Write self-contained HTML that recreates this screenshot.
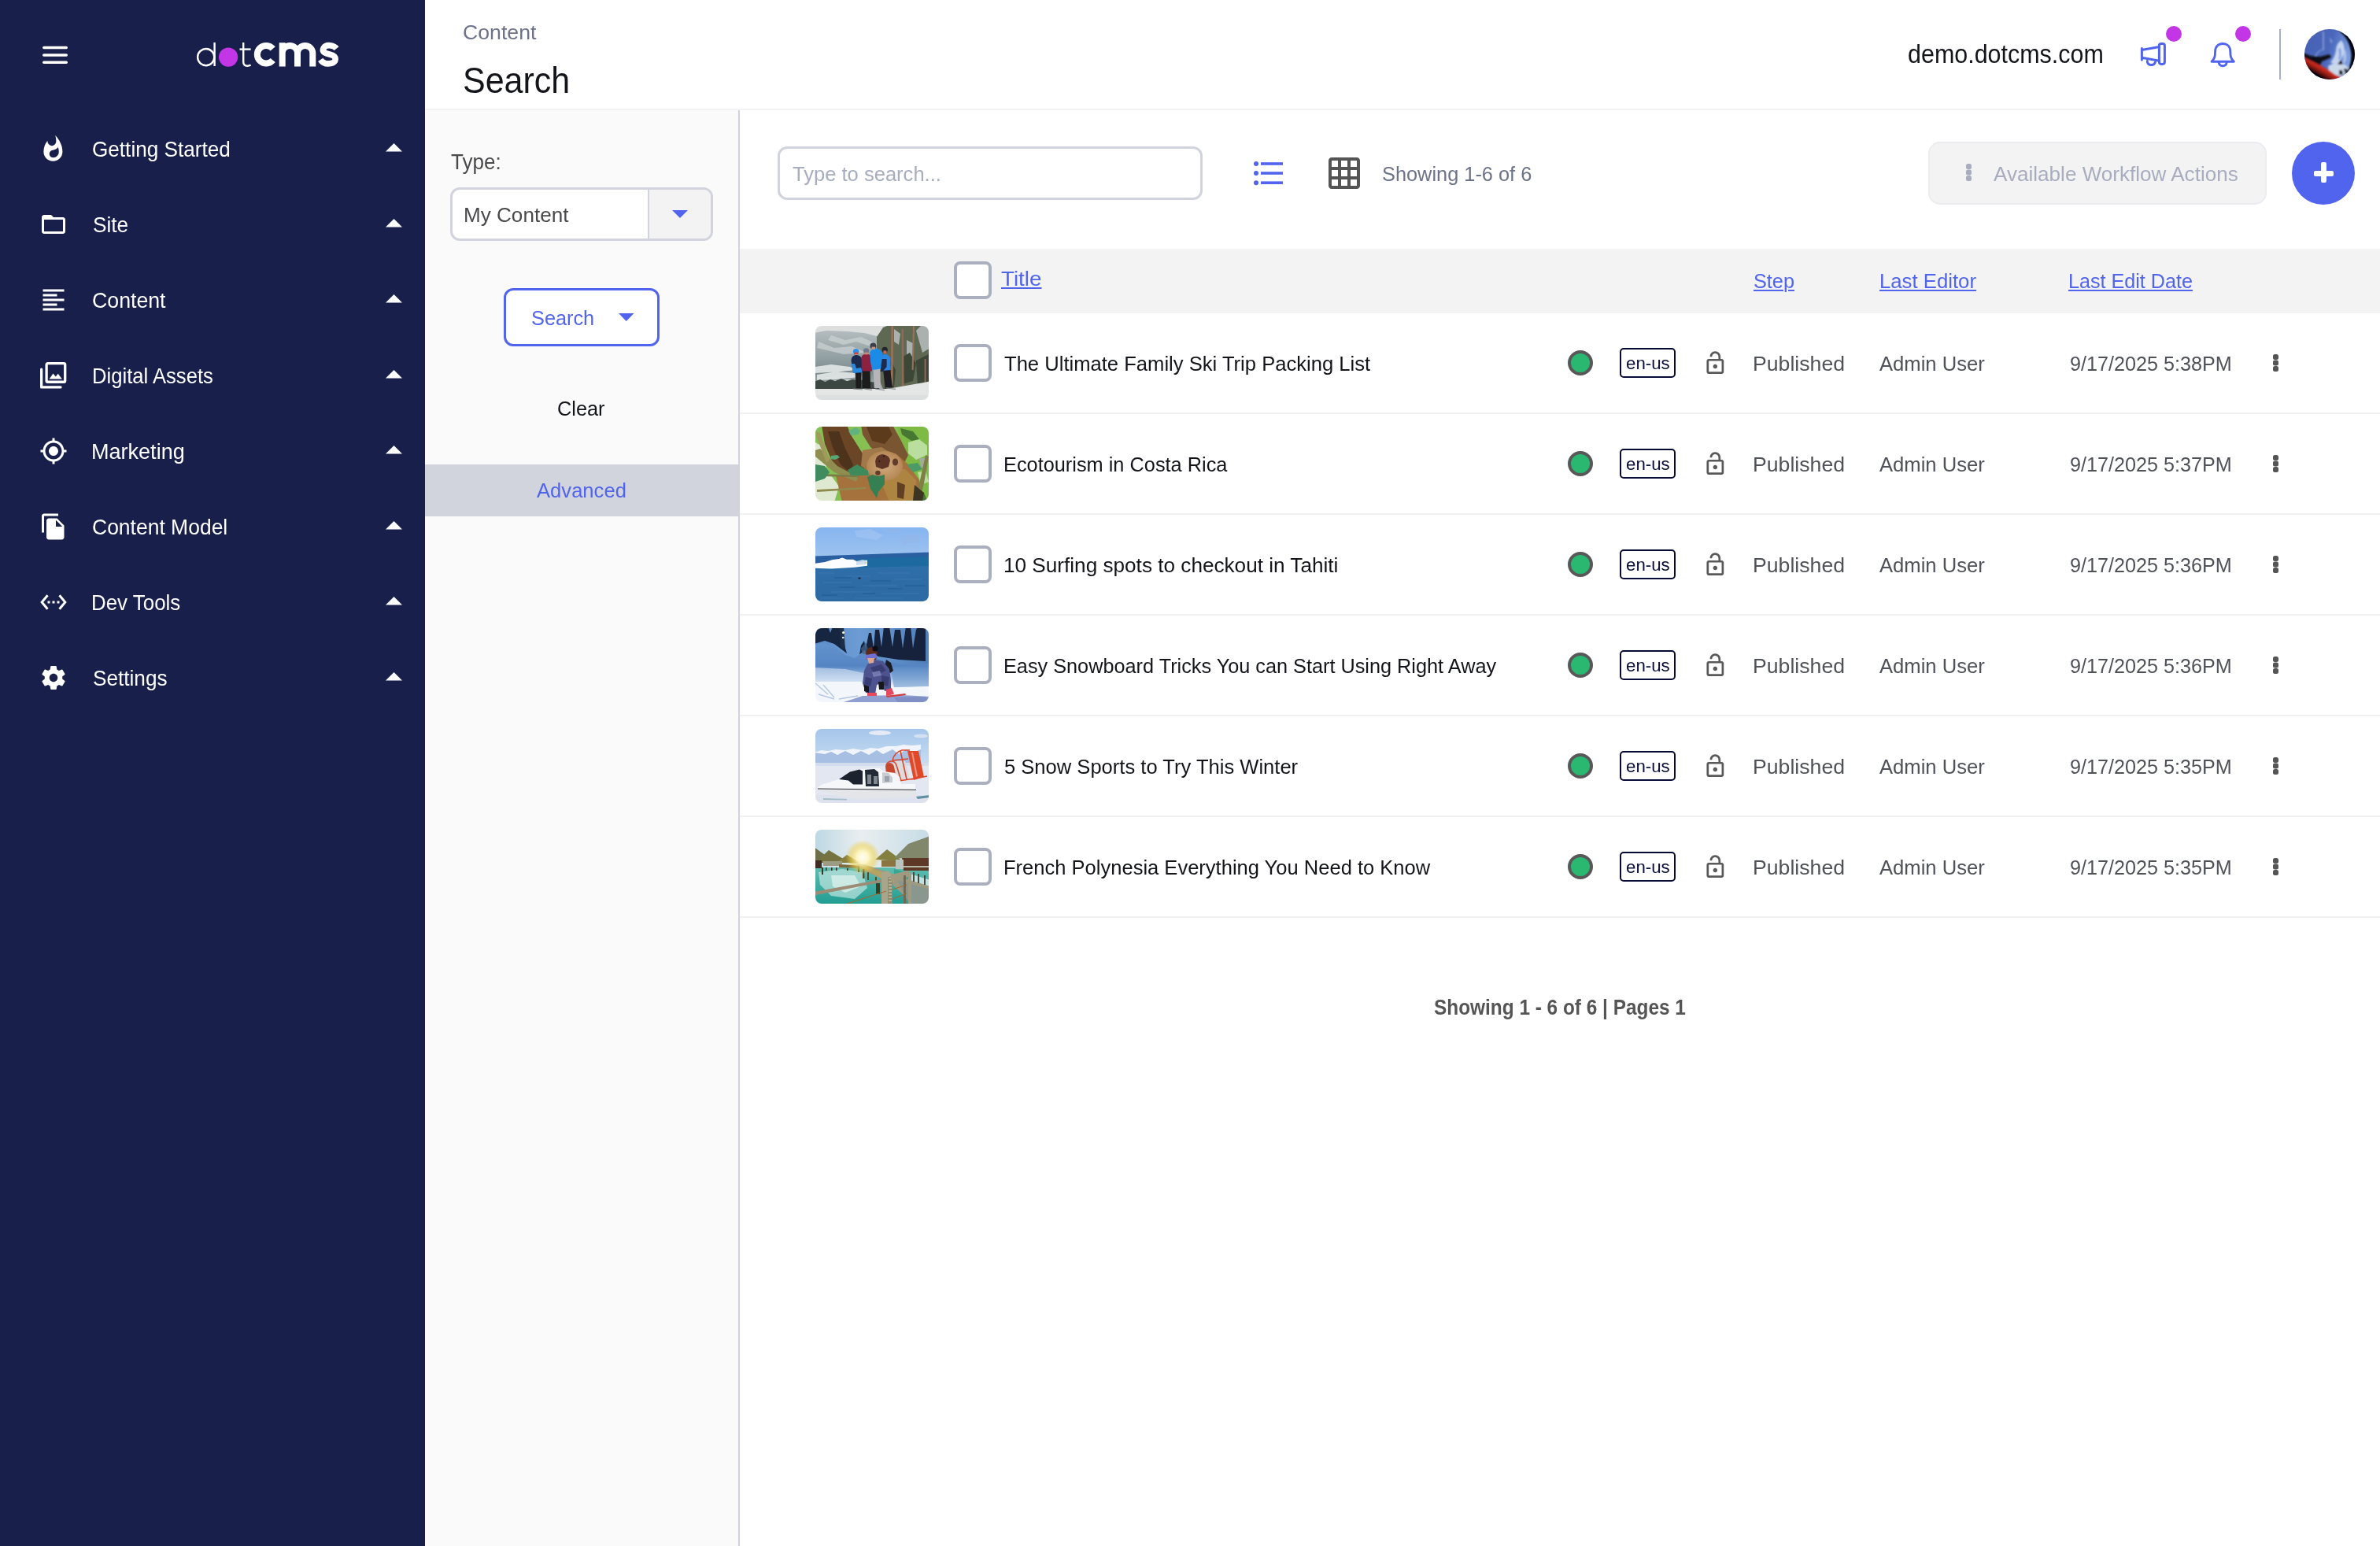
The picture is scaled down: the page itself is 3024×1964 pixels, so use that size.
<!DOCTYPE html>
<html lang="en"><head><meta charset="utf-8"><title>dotCMS - Content Search</title>
<style>
*{box-sizing:border-box;margin:0;padding:0}
html,body{width:3024px;height:1964px;overflow:hidden;background:#fff}
body{font-family:"Liberation Sans", sans-serif;position:relative}
div,span,a,nav,aside,header,main,section,button,ul,li,svg,label,h1{position:absolute}
.t{white-space:pre;line-height:1;transform-origin:0 0;display:block;font-weight:400}
ul{list-style:none}
button{border:0;background:none;font:inherit}
svg{overflow:visible}
.cb{width:48px;height:48px;border:4px solid #abb0c1;border-radius:8px;background:#fff}
.rowline{left:940px;width:2084px;height:2px;background:#f0f0f2}
.thumb{width:144px;height:94px;border-radius:8px;overflow:hidden;left:1036px}
.dot{width:32px;height:32px;border-radius:50%;background:#2ab870;border:4px solid #585858;left:1992px}
.lang{left:2058px;width:71px;height:38px;border:2px solid #070b33;border-radius:5px;background:#fff}
</style></head><body>

<aside style="left:0;top:0;width:540px;height:1964px;background:#181f4b">
<svg style="left:54px;top:58px" width="32" height="24" viewBox="0 0 32 24" ><rect x="0" y="0.8" width="32" height="3.4" rx="1.7" fill="#fff"/><rect x="0" y="10.3" width="32" height="3.4" rx="1.7" fill="#fff"/><rect x="0" y="19.6" width="32" height="3.4" rx="1.7" fill="#fff"/></svg>
<svg style="left:240px;top:40px" width="200" height="60" viewBox="0 0 200 60" ><g fill="none" stroke="#fff" stroke-width="2.4"><circle cx="21.7" cy="32.6" r="10.6"/><path d="M32.6 13.9V44"/><path d="M69.2 13.9V38.5q0 5.2 5 5.2q2.4 0 4.4-1.2"/><path d="M64.5 22.6H78.6"/></g><circle cx="50.1" cy="32.6" r="12.1" fill="#c336e5"/><g fill="none" stroke="#fff" stroke-width="8"><path d="M106.76 21.94A11.3 11.3 0 1 0 106.76 36.46"/><path d="M118.7 44.4V14.3M118.7 27.6A9.65 9.65 0 0 1 138 27.6V44.4M138 27.6A9.65 9.65 0 0 1 157.3 27.6V44.4"/><path stroke-width="7.6" d="M187.6 21.6C184 17.2 174.5 15.8 171.2 20.8C168 26.5 175 28.2 179.5 29.3C189 31.6 187.5 39.2 180.5 40.6C175 41.6 170 40 167.2 35.8"/></g></svg>
<nav style="left:0;top:0;width:540px;height:1000px"><ul style="left:0;top:0">
<li><svg style="left:50px;top:170.5px" width="36" height="36" viewBox="0 0 24 24" ><path d="M13.5.67s.74 2.65.74 4.9c0 2.14-1.4 3.88-3.54 3.88-2.15 0-3.77-1.74-3.77-3.88l.03-.36C4.87 7.7 3.6 10.95 3.6 14.5c0 4.42 3.58 8 8 8s8-3.58 8-8C19.6 9.11 17 4.3 13.5.67zM11.71 19.5c-1.78 0-3.22-1.4-3.22-3.14 0-1.62 1.05-2.76 2.81-3.12 1.77-.36 3.6-1.21 4.62-2.58.39 1.29.59 2.65.59 4.04 0 2.65-2.15 4.8-4.8 4.8z" fill="#fff"/></svg><span class="t" style="left:117.27px;top:175.00px;font-size:28.35px;color:#fff;transform:scaleX(0.9219);">Getting Started</span><svg style="left:489.5px;top:182.0px" width="21" height="10.5" viewBox="0 0 21 10.5" ><path d="M0 10.5L10.5 0L21 10.5z" fill="#fff"/></svg></li>
<li><svg style="left:50px;top:266.55px" width="36" height="36" viewBox="0 0 24 24" ><path d="M20 6h-8l-2-2H4c-1.1 0-1.99.9-1.99 2L2 18c0 1.1.9 2 2 2h16c1.1 0 2-.9 2-2V8c0-1.1-.9-2-2-2zm0 12H4V8h16v10z" fill="#fff"/></svg><span class="t" style="left:117.68px;top:271.05px;font-size:28.35px;color:#fff;transform:scaleX(0.9249);">Site</span><svg style="left:489.5px;top:278.05px" width="21" height="10.5" viewBox="0 0 21 10.5" ><path d="M0 10.5L10.5 0L21 10.5z" fill="#fff"/></svg></li>
<li><svg style="left:50px;top:362.6px" width="36" height="36" viewBox="0 0 24 24" ><path d="M15 15H3v2h12v-2zm0-8H3v2h12V7zM3 13h18v-2H3v2zm0 8h18v-2H3v2zM3 3v2h18V3H3z" fill="#fff"/></svg><span class="t" style="left:117.25px;top:367.10px;font-size:28.35px;color:#fff;transform:scaleX(0.9423);">Content</span><svg style="left:489.5px;top:374.1px" width="21" height="10.5" viewBox="0 0 21 10.5" ><path d="M0 10.5L10.5 0L21 10.5z" fill="#fff"/></svg></li>
<li><svg style="left:51.3px;top:459.84999999999997px" width="34" height="34" viewBox="0 0 34 34" ><g fill="none" stroke="#fff" stroke-width="3.3" stroke-linejoin="round" stroke-linecap="round"><rect x="8.1" y="1.65" width="23.6" height="23.6" rx="1.6"/><path d="M1.65 9.2V31.9H26"/></g><path d="M11.6 21.4l4.9-7 3.3 4.2 2.9-3.8 5.2 6.6z" fill="#fff"/></svg><span class="t" style="left:116.50px;top:463.15px;font-size:28.35px;color:#fff;transform:scaleX(0.9043);">Digital Assets</span><svg style="left:489.5px;top:470.15px" width="21" height="10.5" viewBox="0 0 21 10.5" ><path d="M0 10.5L10.5 0L21 10.5z" fill="#fff"/></svg></li>
<li><svg style="left:50px;top:554.7px" width="36" height="36" viewBox="0 0 24 24" ><path d="M12 8c-2.21 0-4 1.79-4 4s1.79 4 4 4 4-1.79 4-4-1.79-4-4-4zm8.94 3c-.46-4.17-3.77-7.48-7.94-7.94V1h-2v2.06C6.83 3.52 3.52 6.83 3.06 11H1v2h2.06c.46 4.17 3.77 7.48 7.94 7.94V23h2v-2.06c4.17-.46 7.48-3.77 7.94-7.94H23v-2h-2.06zM12 19c-3.87 0-7-3.13-7-7s3.13-7 7-7 7 3.13 7 7-3.13 7-7 7z" fill="#fff"/></svg><span class="t" style="left:116.39px;top:559.20px;font-size:28.35px;color:#fff;transform:scaleX(0.9539);">Marketing</span><svg style="left:489.5px;top:566.2px" width="21" height="10.5" viewBox="0 0 21 10.5" ><path d="M0 10.5L10.5 0L21 10.5z" fill="#fff"/></svg></li>
<li><svg style="left:50px;top:650.75px" width="36" height="36" viewBox="0 0 24 24" ><path d="M16 1H4c-1.1 0-2 .9-2 2v14h2V3h12V1zm-1 4l6 6v10c0 1.1-.9 2-2 2H7.99C6.89 23 6 22.1 6 21l.01-14c0-1.1.89-2 1.99-2h7zm-1 7h5.5L14 6.5V12z" fill="#fff"/></svg><span class="t" style="left:117.26px;top:655.25px;font-size:28.35px;color:#fff;transform:scaleX(0.9344);">Content Model</span><svg style="left:489.5px;top:662.25px" width="21" height="10.5" viewBox="0 0 21 10.5" ><path d="M0 10.5L10.5 0L21 10.5z" fill="#fff"/></svg></li>
<li><svg style="left:50px;top:746.8px" width="36" height="36" viewBox="0 0 24 24" ><path d="M7.77 6.76L6.23 5.48.82 12l5.41 6.52 1.54-1.28L3.42 12l4.35-5.24zM7 13h2v-2H7v2zm10-2h-2v2h2v-2zm-6 2h2v-2h-2v2zm6.77-7.52l-1.54 1.28L20.58 12l-4.35 5.24 1.54 1.28L23.18 12l-5.41-6.52z" fill="#fff"/></svg><span class="t" style="left:116.48px;top:751.30px;font-size:28.35px;color:#fff;transform:scaleX(0.9137);">Dev Tools</span><svg style="left:489.5px;top:758.3px" width="21" height="10.5" viewBox="0 0 21 10.5" ><path d="M0 10.5L10.5 0L21 10.5z" fill="#fff"/></svg></li>
<li><svg style="left:50px;top:842.85px" width="36" height="36" viewBox="0 0 24 24" ><path d="M19.43 12.98c.04-.32.07-.64.07-.98s-.03-.66-.07-.98l2.11-1.65c.19-.15.24-.42.12-.64l-2-3.46c-.12-.22-.39-.3-.61-.22l-2.49 1c-.52-.4-1.08-.73-1.69-.98l-.38-2.65C14.46 2.18 14.25 2 14 2h-4c-.25 0-.46.18-.49.42l-.38 2.65c-.61.25-1.17.59-1.69.98l-2.49-1c-.23-.09-.49 0-.61.22l-2 3.46c-.13.22-.07.49.12.64l2.11 1.65c-.04.32-.07.65-.07.98s.03.66.07.98l-2.11 1.65c-.19.15-.24.42-.12.64l2 3.46c.12.22.39.3.61.22l2.49-1c.52.4 1.08.73 1.69.98l.38 2.65c.03.24.24.42.49.42h4c.25 0 .46-.18.49-.42l.38-2.65c.61-.25 1.17-.59 1.69-.98l2.49 1c.23.09.49 0 .61-.22l2-3.46c.12-.22.07-.49-.12-.64l-2.11-1.65zM12 15.5c-1.93 0-3.5-1.57-3.5-3.5s1.57-3.5 3.5-3.5 3.5 1.57 3.5 3.5-1.57 3.5-3.5 3.5z" fill="#fff"/></svg><span class="t" style="left:117.68px;top:847.35px;font-size:28.35px;color:#fff;transform:scaleX(0.9229);">Settings</span><svg style="left:489.5px;top:854.35px" width="21" height="10.5" viewBox="0 0 21 10.5" ><path d="M0 10.5L10.5 0L21 10.5z" fill="#fff"/></svg></li>
</ul></nav></aside>
<header style="left:540px;top:0;width:2484px;height:140px;background:#fff;border-bottom:2px solid #f2f2f4"></header>
<span class="t" style="left:587.50px;top:27.89px;font-size:26.12px;color:#6c7389;transform:scaleX(1.0210);">Content</span>
<h1 class="t" style="left:588.16px;top:78.98px;font-size:46.09px;color:#14151a;transform:scaleX(0.9331);">Search</h1>
<span class="t" style="left:2423.65px;top:51.64px;font-size:33.5px;color:#14151a;transform:scaleX(0.9092);">demo.dotcms.com</span>
<svg style="left:2719.3px;top:52.9px" width="34" height="34" viewBox="0 0 34 34" ><g fill="none" stroke="#5064ee" stroke-width="3" stroke-linejoin="round" stroke-linecap="round"><rect x="24.4" y="2.4" width="7" height="26" rx="2.6"/><path d="M24.4 6.6L2.4 10.6M24.4 24.3L2.4 20.3M2.4 8.4V23"/><path d="M9.2 24.4q0.3 5.2 5.2 5.2q4.2 0 5-3.6"/></g></svg>
<svg style="left:2807.8px;top:52.9px" width="34" height="34" viewBox="0 0 34 34" ><g fill="none" stroke="#5064ee" stroke-width="2.9" stroke-linejoin="round" stroke-linecap="round"><path d="M2 25.2C5.6 21.6 6.6 19 6.6 12.4C6.6 6 10.8 2.5 16.2 2.5C21.6 2.5 25.8 6 25.8 12.4C25.8 19 26.8 21.6 30.4 25.2Z"/><path d="M11.2 26.4q0.6 4.4 5 4.4q4.4 0 5-4.4"/></g></svg>
<div style="left:2752px;top:33px;width:20.4px;height:20.4px;border-radius:50%;background:#c336e5"></div>
<div style="left:2840px;top:33px;width:20.4px;height:20.4px;border-radius:50%;background:#c336e5"></div>
<div style="left:2896px;top:37px;width:2px;height:64px;background:#a9aec2"></div>
<svg style="left:2928px;top:37px" width="64" height="64" viewBox="0 0 64 64" ><defs><clipPath id="avc"><circle cx="32" cy="32" r="32"/></clipPath><linearGradient id="avg" x1="0" y1="0" x2="1" y2="0.3"><stop offset="0" stop-color="#4761b2"/><stop offset=".55" stop-color="#4a67bb"/><stop offset="1" stop-color="#7ea0e2"/></linearGradient><linearGradient id="avr" gradientUnits="userSpaceOnUse" x1="30" y1="48" x2="22" y2="62"><stop offset="0" stop-color="#f03c2b"/><stop offset=".45" stop-color="#b52418"/><stop offset="1" stop-color="#120304"/></linearGradient><filter id="avb" x="-10%" y="-10%" width="120%" height="120%"><feGaussianBlur stdDeviation="0.9"/></filter></defs><g clip-path="url(#avc)"><rect width="64" height="64" fill="url(#avg)"/><g filter="url(#avb)"><path d="M24 3V27" stroke="#b9c8ec" stroke-width="1.3" opacity=".75"/><path d="M14 34q4-7 9-8" stroke="#a9bce6" stroke-width="1.2" fill="none" opacity=".7"/><path d="M32 10l3 5-1 4z" fill="#c5d4f0" opacity=".7"/><path d="M47 14q-7 5-7 13-1 9-7 15l8 4q7-8 9-16 2-9-3-16z" fill="#d6e4f7" opacity=".85"/><path d="M52 26q3 8 0 16l-4 4q3-10 0-18z" fill="#c5d6f2" opacity=".7"/><path d="M46 24q2 7 0 14l-3 1q2-8 0-14z" fill="#6a8ad6" opacity=".7"/><path d="M36 -3Q58 8 59.6 34Q59 48 51 60L70 66V-6z" fill="#030409"/><path d="M-2 30l10 4 12 1 12-3 2 4-12 5-2 5 12 7 10 8 6 10H-4z" fill="#0c0c12"/><path d="M-2 35L20 46 46 60 40 68H-4z" fill="url(#avr)"/><path d="M-4 44L22 60 30 70H-6z" fill="#060507"/><path d="M30 47l6-3 8 1 8 0 4 5-4 7-7 3-6-2-8-6z" fill="#cbd8ea"/><path d="M42 45l4-6 3 6zM44 52l4 0 1 6-5 0zM50 50l5 1-3 7z" fill="#0d0e13"/></g></g></svg>
<section style="left:540px;top:140px;width:400px;height:1824px;background:#fafafa;border-right:2px solid #d0d3dd"></section>
<label class="t" style="left:572.59px;top:191.95px;font-size:27.23px;color:#4a4a4c;transform:scaleX(0.9574);">Type:</label>
<div style="left:572px;top:238px;width:334px;height:68px;border:3px solid #d1d4de;border-radius:12px;background:#fff;overflow:hidden"><div style="left:247.5px;top:0;width:84px;height:62px;background:#f3f3f4;border-left:2.5px solid #d1d4de"></div></div>
<span class="t" style="left:589.46px;top:260.03px;font-size:26.54px;color:#4a4a4c;transform:scaleX(0.9834);">My Content</span>
<svg style="left:854.0px;top:267.0px" width="20" height="10" viewBox="0 0 20 10" ><path d="M0 0H20L10.0 10z" fill="#5064ee"/></svg>
<button style="left:640px;top:366px;width:198px;height:74px;border:3px solid #5064ee;border-radius:12px;background:#fff"></button>
<span class="t" style="left:674.96px;top:390.53px;font-size:26.54px;color:#5064ee;transform:scaleX(0.9539);">Search</span>
<svg style="left:785.5px;top:398.0px" width="19.5" height="10" viewBox="0 0 19.5 10" ><path d="M0 0H19.5L9.75 10z" fill="#5064ee"/></svg>
<span class="t" style="left:708.31px;top:505.53px;font-size:26.54px;color:#14151a;transform:scaleX(0.9549);">Clear</span>
<div style="left:540px;top:590px;width:398px;height:65.5px;background:#d1d4dd"></div>
<span class="t" style="left:682.00px;top:610.03px;font-size:26.54px;color:#5064ee;transform:scaleX(0.9652);">Advanced</span>
<div style="left:988px;top:186px;width:540px;height:68px;border:3px solid #d1d4de;border-radius:12px;background:#fff"></div>
<span class="t" style="left:1007.10px;top:207.53px;font-size:26.54px;color:#a7adbf;transform:scaleX(0.9631);">Type to search...</span>
<svg style="left:1593px;top:204.8px" width="38" height="31" viewBox="0 0 38 31" ><circle cx="3" cy="3.0" r="3" fill="#5064ee"/><rect x="9" y="1.2" width="28" height="3.6" fill="#5064ee"/><circle cx="3" cy="15.0" r="3" fill="#5064ee"/><rect x="9" y="13.2" width="28" height="3.6" fill="#5064ee"/><circle cx="3" cy="27.2" r="3" fill="#5064ee"/><rect x="9" y="25.4" width="28" height="3.6" fill="#5064ee"/></svg>
<svg style="left:1684px;top:196px" width="48" height="48" viewBox="0 0 24 24" ><path d="M20 2H4c-1.1 0-2 .9-2 2v16c0 1.1.9 2 2 2h16c1.1 0 2-.9 2-2V4c0-1.1-.9-2-2-2zM8 20H4v-4h4v4zm0-6H4v-4h4v4zm0-6H4V4h4v4zm6 12h-4v-4h4v4zm0-6h-4v-4h4v4zm0-6h-4V4h4v4zm6 12h-4v-4h4v4zm0-6h-4v-4h4v4zm0-6h-4V4h4v4z" fill="#555"/></svg>
<span class="t" style="left:1755.71px;top:207.53px;font-size:26.54px;color:#6c7389;transform:scaleX(0.9555);">Showing 1-6 of 6</span>
<button style="left:2450px;top:180px;width:430px;height:80px;border:2px solid #ebecef;border-radius:15px;background:#f3f3f4"></button>
<svg style="left:2497.5px;top:208.0px" width="7" height="22.0" viewBox="0 0 7 22.0" ><rect x="0" y="0.00" width="7" height="7" rx="2.52" fill="#a7adbf"/><rect x="0" y="7.50" width="7" height="7" rx="2.52" fill="#a7adbf"/><rect x="0" y="15.00" width="7" height="7" rx="2.52" fill="#a7adbf"/></svg>
<span class="t" style="left:2533.00px;top:207.53px;font-size:26.54px;color:#a7adbf;transform:scaleX(0.9832);">Available Workflow Actions</span>
<button style="left:2912px;top:180px;width:80px;height:80px;border-radius:50%;background:#5064ee"><div style="left:27.5px;top:36.5px;width:25.5px;height:7px;border-radius:2px;background:#fff"></div><div style="left:36.75px;top:26px;width:7px;height:25.5px;border-radius:2px;background:#fff"></div></button>
<div style="left:940px;top:316px;width:2084px;height:82px;background:#f3f3f4"></div>
<div class="cb" style="left:1212px;top:332px;width:48px;height:48px;"></div>
<a class="t" style="left:1271.50px;top:340.53px;font-size:26.54px;color:#5064ee;transform:scaleX(1.0477);text-decoration:underline;text-decoration-thickness:2px;text-underline-offset:1.5px;">Title</a>
<a class="t" style="left:2228.00px;top:343.53px;font-size:26.54px;color:#5064ee;transform:scaleX(0.9524);text-decoration:underline;text-decoration-thickness:2px;text-underline-offset:1.5px;">Step</a>
<a class="t" style="left:2388.00px;top:343.53px;font-size:26.54px;color:#5064ee;transform:scaleX(0.9695);text-decoration:underline;text-decoration-thickness:2px;text-underline-offset:1.5px;">Last Editor</a>
<a class="t" style="left:2628.00px;top:343.53px;font-size:26.54px;color:#5064ee;transform:scaleX(0.9478);text-decoration:underline;text-decoration-thickness:2px;text-underline-offset:1.5px;">Last Edit Date</a>
<div class="rowline" style="top:524px"></div>
<div class="thumb" style="top:414px"><svg style="left:0;top:0" width="144" height="94" viewBox="0 0 144 94"><defs><filter id="tb0" x="-5%" y="-5%" width="110%" height="110%"><feGaussianBlur stdDeviation="0.55"/></filter><linearGradient id="t0m" x1="0" y1="0" x2="0" y2="1"><stop offset="0" stop-color="#b3bcbe"/><stop offset=".45" stop-color="#93a0a3"/><stop offset=".7" stop-color="#7d8b8d"/><stop offset="1" stop-color="#a9b2b3"/></linearGradient></defs><g filter="url(#tb0)"><rect x="-2" y="-2" width="148" height="98" fill="#dcdfde"/><path d="M-2 9L14 6L40 7L62 9L82 14L100 22V82H-2z" fill="url(#t0m)"/><path d="M20 12l18 6 20-4 22 10-10 2-18-6-16 4-20-6zM4 20l20 8 22-2 20 8-30 2-34-8z" fill="#c9d0d2" opacity=".75"/><path d="M0 52l20-3 24 3 8 4-20 2-32 2zM2 62l24-4 28 2 2 5-30 3-24 1zM12 70l30-2 14 3-40 3z" fill="#e9ecec" opacity=".85"/><path d="M-2 71l8-3 6 3 7-3 6 2 8-3 7 3 8-2 7 2 6-2 8 3 12 1v10H-2z" fill="#3d4743"/><path d="M78 14l8-12 10-4h50v76l-30 8-30-2-8-20 6-14-6-12z" fill="#5f6853"/><path d="M100 4l8 6-2 14-6-4zM116 18l8 4v20l-8-6zM128 6l8-8h10v30l-10 6z" fill="#c3cacc" opacity=".75"/><path d="M110 40l10-6 8 14-4 22-14 4z M128 44l16-8v34l-14 6z M86 52l10-8 6 12-2 22-12 2z" fill="#3e4737"/><path d="M96.5 -2h2.6l-.6 78h-2.6z" fill="#9b7259"/><path d="M109.6 4h2.4l.6 74h-2.6z" fill="#8f6b55"/><path d="M124 -2h2.2l-1.6 58h-2z" fill="#9b7259"/><path d="M138.6 42h2v30h-2z" fill="#8a6a55"/><path d="M-2 80H92l54-9.5V96H-2z" fill="#e4e6e6"/><path d="M-2 88H146V96H-2z" fill="#dcdfdf"/><path d="M50.5 58h8l-.6 21h-6.2z" fill="#1b1b1f"/><path d="M45.5 44q0-6 6-7 6 0 7.5 5l1 17H48z" fill="#1c2b4e"/><path d="M46 48l4 0 2 6 6-1 2 6-12 1z" fill="#2a8ae2"/><circle cx="51.6" cy="32.6" r="3.7" fill="#2b90e8"/><rect x="49" y="33.6" width="5.4" height="2.6" fill="#e6402a"/><path d="M59.5 56h10l.6 23h-10.4z" fill="#1a1a1e"/><path d="M58.4 40q1-4 6.4-4.4 6 .4 6.8 5l.4 17H59z" fill="#8c2040"/><circle cx="64.6" cy="31.8" r="3.6" fill="#6f7690"/><rect x="62.4" y="33.6" width="4.6" height="2.8" fill="#c98a7a"/><path d="M73.4 53h9l.4 26h-8z" fill="#b6b6b8"/><path d="M69 34q2-5 8-5.4 6 .8 8 6l1.2 12-1.8 8-12 1.4-2-8z" fill="#1f8be8"/><circle cx="73.4" cy="25.4" r="4" fill="#3b3e47"/><rect x="71.4" y="26.6" width="4.6" height="3.4" fill="#c79382"/><path d="M86 55h9l3 23h-9z" fill="#1c1c21"/><path d="M83 40q2-4 6.4-4 5 1 6 6l.4 14-11 1z" fill="#2a86e2"/><path d="M84.6 42h6v10l-5 6h-3z" fill="#1c2b4e"/><circle cx="88.2" cy="30.4" r="3.7" fill="#24252b"/><rect x="86.4" y="31.4" width="4" height="3.6" fill="#c0685a"/><path d="M48 80l12 1M62 80l10 1.4M76 80l12 1.6M90 79l12 1.4" stroke="#8a8f92" stroke-width="1.2"/></g></svg></div>
<div class="cb" style="left:1212px;top:437px"></div>
<span class="t" style="left:1276.10px;top:448.69px;font-size:26.12px;color:#14151a;transform:scaleX(0.9804);">The Ultimate Family Ski Trip Packing List</span>
<div class="dot" style="top:445px"></div>
<div class="lang" style="top:442px"></div>
<span class="t" style="left:2066.30px;top:451.18px;font-size:22px;color:#0a0e3a;transform:scaleX(1.0120);">en-us</span>
<svg style="left:2163.35px;top:444.84000000000003px" width="32.7" height="32.7" viewBox="0 0 24 24" ><path d="M18 8h-1V6c0-2.76-2.24-5-5-5S7 3.24 7 6h2c0-1.66 1.34-3 3-3s3 1.34 3 3v2H6c-1.1 0-2 .9-2 2v10c0 1.1.9 2 2 2h12c1.1 0 2-.9 2-2V10c0-1.1-.9-2-2-2zm0 12H6V10h12v10zm-6-3c1.1 0 2-.9 2-2s-.9-2-2-2-2 .9-2 2 .9 2 2 2z" fill="#595959"/></svg>
<span class="t" style="left:2226.92px;top:448.69px;font-size:26.12px;color:#50525a;transform:scaleX(1.0206);">Published</span>
<span class="t" style="left:2388.00px;top:448.69px;font-size:26.12px;color:#50525a;transform:scaleX(0.9812);">Admin User</span>
<span class="t" style="left:2629.82px;top:448.69px;font-size:26.12px;color:#50525a;transform:scaleX(0.9644);">9/17/2025 5:38PM</span>
<svg style="left:2888.0px;top:449.5px" width="7" height="22.0" viewBox="0 0 7 22.0" ><rect x="0" y="0.00" width="7" height="7" rx="2.52" fill="#555"/><rect x="0" y="7.50" width="7" height="7" rx="2.52" fill="#555"/><rect x="0" y="15.00" width="7" height="7" rx="2.52" fill="#555"/></svg>
<div class="rowline" style="top:652px"></div>
<div class="thumb" style="top:542px"><svg style="left:0;top:0" width="144" height="94" viewBox="0 0 144 94"><defs><filter id="tb1" x="-5%" y="-5%" width="110%" height="110%"><feGaussianBlur stdDeviation="0.55"/></filter><radialGradient id="t1f" cx=".5" cy=".5" r=".5"><stop offset="0" stop-color="#d2ab7e"/><stop offset="1" stop-color="#b58755"/></radialGradient></defs><g filter="url(#tb1)"><rect x="-2" y="-2" width="148" height="98" fill="#86c052"/><path d="M0 20l10 6 4 26-14 4zM0 66l20-4 10 14-6 20H-2z" fill="#dfe9d2"/><path d="M104 0h42v94h-30l6-30-10-26z" fill="#7dbb45"/><path d="M118 20l14-4 10 8v12l-14 6-10-8z M130 58l10-2 4 14-10 4z" fill="#cfe9bb" opacity=".75"/><path d="M108 2l16 4 8 10-10 2-12-8z M124 78l14 6 4 10h-18z" fill="#2f5a2a" opacity=".7"/><path d="M132 40l10 0 0 12-8 0z" fill="#b9a0d8" opacity=".6"/><path d="M8 -2h32l6 14 14 22 6 22-8 12-22-2-14-20-10-24z" fill="#6b4525"/><path d="M16 6l14 0 8 22 10 20-4 10-12-10-10-22z" fill="#4d301a"/><path d="M58 -2h40l10 18 10 20-6 12-24-8-18-14-10-16z" fill="#7a5530"/><path d="M64 -2h28l6 12-10 12-16-4z" fill="#5c3a1e"/><path d="M60 30l24-4 22 14 6 14-30 10-24-14z" fill="#a07848"/><path d="M26 62l30-2 16-20 30-6 16 14 14 20 4 28H34z" fill="#a5713d"/><path d="M92 54l22 0 14 14 0 28h-34l-8-20z" fill="#ad8440"/><path d="M104 70l10 4-2 18-8-2z" fill="#5f4122"/><ellipse cx="88" cy="50" rx="23" ry="19" fill="url(#t1f)"/><path d="M76 44q1-8 9-9 9 1 10 8l-2 8-8 3-8-3z" fill="#5b3628"/><circle cx="81.4" cy="44" r="1" fill="#2a1510"/><circle cx="87" cy="37.6" r="1" fill="#2a1510"/><ellipse cx="101.5" cy="45" rx="3.6" ry="4.6" fill="#5e3d2a"/><ellipse cx="79.4" cy="58.8" rx="3.2" ry="3" fill="#5e3d2a"/><path d="M0 30l6-2 22 22 26 14-2 6-28-12-24-20z" fill="#8f8d4f"/><path d="M0 6l6 2 12 34-4 4L2 14z" fill="#a09b5c"/><path d="M-2 60l58 1.6v2.6l-58-1.4z" fill="#7d7b4a"/><path d="M2 80l62-3v2l-62 4z" fill="#8e8b4e"/><path d="M140 36l4 2-6 34-6 24h-5l6-28z" fill="#7f7f45"/><path d="M126 74l12 10-2 10h-12z" fill="#3a3420"/><path d="M0 48l12 2 6 8-6 8-12 4z" fill="#3f8c5e"/><path d="M20 37l8-1 3 3-6 3-6-1z" fill="#5aa577"/><path d="M42 5l10-4 5 4-2 5-10 1z" fill="#62b27f"/><path d="M41 55l12-7 14 8 0 6-22 0z" fill="#3d8a5c"/><path d="M66 64l6-3 8 2 8-2 0 12-8 10-2 8-8-12z" fill="#357f52"/><path d="M116 48l14-2 6 8-12 4z" fill="#4c9a68"/></g></svg></div>
<div class="cb" style="left:1212px;top:565px"></div>
<span class="t" style="left:1274.52px;top:576.69px;font-size:26.12px;color:#14151a;transform:scaleX(0.9703);">Ecotourism in Costa Rica</span>
<div class="dot" style="top:573px"></div>
<div class="lang" style="top:570px"></div>
<span class="t" style="left:2066.30px;top:579.18px;font-size:22px;color:#0a0e3a;transform:scaleX(1.0120);">en-us</span>
<svg style="left:2163.35px;top:572.84px" width="32.7" height="32.7" viewBox="0 0 24 24" ><path d="M18 8h-1V6c0-2.76-2.24-5-5-5S7 3.24 7 6h2c0-1.66 1.34-3 3-3s3 1.34 3 3v2H6c-1.1 0-2 .9-2 2v10c0 1.1.9 2 2 2h12c1.1 0 2-.9 2-2V10c0-1.1-.9-2-2-2zm0 12H6V10h12v10zm-6-3c1.1 0 2-.9 2-2s-.9-2-2-2-2 .9-2 2 .9 2 2 2z" fill="#595959"/></svg>
<span class="t" style="left:2226.92px;top:576.69px;font-size:26.12px;color:#50525a;transform:scaleX(1.0206);">Published</span>
<span class="t" style="left:2388.00px;top:576.69px;font-size:26.12px;color:#50525a;transform:scaleX(0.9812);">Admin User</span>
<span class="t" style="left:2629.82px;top:576.69px;font-size:26.12px;color:#50525a;transform:scaleX(0.9644);">9/17/2025 5:37PM</span>
<svg style="left:2888.0px;top:577.5px" width="7" height="22.0" viewBox="0 0 7 22.0" ><rect x="0" y="0.00" width="7" height="7" rx="2.52" fill="#555"/><rect x="0" y="7.50" width="7" height="7" rx="2.52" fill="#555"/><rect x="0" y="15.00" width="7" height="7" rx="2.52" fill="#555"/></svg>
<div class="rowline" style="top:780px"></div>
<div class="thumb" style="top:670px"><svg style="left:0;top:0" width="144" height="94" viewBox="0 0 144 94"><defs><filter id="tb2" x="-5%" y="-5%" width="110%" height="110%"><feGaussianBlur stdDeviation="0.55"/></filter><linearGradient id="t2s" x1="0" y1="0" x2="0" y2="1"><stop offset="0" stop-color="#84b4f1"/><stop offset="1" stop-color="#9fc4ee"/></linearGradient><linearGradient id="t2w" x1="0" y1="0" x2="0" y2="1"><stop offset="0" stop-color="#2f6ea9"/><stop offset="1" stop-color="#2d69a2"/></linearGradient></defs><g filter="url(#tb2)"><rect x="-2" y="-2" width="148" height="42" fill="url(#t2s)"/><path d="M86 2h24l-2 4h-20zM20 8h14v2H20zM108 12l24-4v10l-22 4z" fill="#93b6ea" opacity=".7"/><path d="M50 4l20-2 16 8-8 6-26-4z" fill="#a9c8f2" opacity=".5"/><path d="M-2 36.6L146 31.4V96H-2z" fill="#2b5ea2"/><path d="M-2 45l20 0 20-4 20 0 10-2 78-2v10l-94 4-54 2z" fill="#24609d"/><path d="M52 41l20-2.6 74-1.4v12l-94 3z" fill="#1b6a9f"/><path d="M-2 51L50 51 146 49V96H-2z" fill="url(#t2w)"/><path d="M-2 46l14-2 10-3 8-1 4-1.6 6 2.4 8 0 6 3 4 0 4-2 4 0 0 7-16 2-30 1.6-22-.6z" fill="#fbfdff"/><path d="M52 43l8-2 6 2-2 4-12 1z" fill="#c9dcec" opacity=".9"/><rect x="63" y="44" width="2" height="1.6" fill="#e8c65a"/><path d="M4 58h20M40 62h30M80 58h40M10 70h36M60 74h44M100 66h36M20 82h50M84 84h48M6 90h30M50 90h60" stroke="#3c79b1" stroke-width="1.4" opacity=".55"/><path d="M24 64h22M70 68h26M114 74h26M30 76h20M92 78h18M8 86h20M60 84h16" stroke="#22598f" stroke-width="1.4" opacity=".6"/><ellipse cx="56" cy="64.6" rx="1.8" ry="1" fill="#251a28"/></g></svg></div>
<div class="cb" style="left:1212px;top:693px"></div>
<span class="t" style="left:1274.87px;top:704.69px;font-size:26.12px;color:#14151a;transform:scaleX(1.0015);">10 Surfing spots to checkout in Tahiti</span>
<div class="dot" style="top:701px"></div>
<div class="lang" style="top:698px"></div>
<span class="t" style="left:2066.30px;top:707.18px;font-size:22px;color:#0a0e3a;transform:scaleX(1.0120);">en-us</span>
<svg style="left:2163.35px;top:700.84px" width="32.7" height="32.7" viewBox="0 0 24 24" ><path d="M18 8h-1V6c0-2.76-2.24-5-5-5S7 3.24 7 6h2c0-1.66 1.34-3 3-3s3 1.34 3 3v2H6c-1.1 0-2 .9-2 2v10c0 1.1.9 2 2 2h12c1.1 0 2-.9 2-2V10c0-1.1-.9-2-2-2zm0 12H6V10h12v10zm-6-3c1.1 0 2-.9 2-2s-.9-2-2-2-2 .9-2 2 .9 2 2 2z" fill="#595959"/></svg>
<span class="t" style="left:2226.92px;top:704.69px;font-size:26.12px;color:#50525a;transform:scaleX(1.0206);">Published</span>
<span class="t" style="left:2388.00px;top:704.69px;font-size:26.12px;color:#50525a;transform:scaleX(0.9812);">Admin User</span>
<span class="t" style="left:2629.82px;top:704.69px;font-size:26.12px;color:#50525a;transform:scaleX(0.9644);">9/17/2025 5:36PM</span>
<svg style="left:2888.0px;top:705.5px" width="7" height="22.0" viewBox="0 0 7 22.0" ><rect x="0" y="0.00" width="7" height="7" rx="2.52" fill="#555"/><rect x="0" y="7.50" width="7" height="7" rx="2.52" fill="#555"/><rect x="0" y="15.00" width="7" height="7" rx="2.52" fill="#555"/></svg>
<div class="rowline" style="top:908px"></div>
<div class="thumb" style="top:798px"><svg style="left:0;top:0" width="144" height="94" viewBox="0 0 144 94"><defs><filter id="tb3" x="-5%" y="-5%" width="110%" height="110%"><feGaussianBlur stdDeviation="0.55"/></filter><linearGradient id="t3s" x1="0" y1="0" x2="1" y2="0"><stop offset="0" stop-color="#5b8cc9"/><stop offset=".4" stop-color="#6d9cd4"/><stop offset="1" stop-color="#4f7db8"/></linearGradient><linearGradient id="t3h" x1="0" y1="0" x2="0" y2="1"><stop offset="0" stop-color="#6394ce"/><stop offset=".38" stop-color="#5585c3"/><stop offset=".56" stop-color="#9dbbe1"/><stop offset=".72" stop-color="#eef3fa"/><stop offset="1" stop-color="#f6f8fc"/></linearGradient></defs><g filter="url(#tb3)"><rect x="-2" y="-2" width="148" height="50" fill="url(#t3s)"/><path d="M-2 24l2-16 4-10h12l3 8 3-8h12l3 24 3 10-8-6-8-6-12-4-14 4z" fill="#15253f"/><path d="M30 -2h6l2 30-6-4z" fill="#1b2d4a"/><path d="M56 34l2-12 4-6 2 10 4-20 3 0 3 20 2-24h5l3 22 3-26h7l4 26 3-22h7l3 24 4-28h6l3 28 4-24 4-6 8 0v46l-34-2-26-4-18-8z" fill="#13223b"/><path d="M58 26l6-8 4 12-8 6z" fill="#3d5f8a" opacity=".8"/><path d="M-2 22q8-4 14-2 14 4 26 14l12 4 8-6 10 2 20 8 28 4 30-1V96H-2z" fill="url(#t3h)"/><path d="M-2 50l40 2 28 6-6 14-40 2-22-2z" fill="#dfe9f6" opacity=".55"/><path d="M96 52l50 0v22l-46 2z" fill="#5f8fc9" opacity=".55"/><path d="M-2 68l60 0 10 8 76-2v22H-2z" fill="#f3f6fb"/><path d="M0 70l16 14M10 72l14 16M4 84l20 6M30 90l24-4" stroke="#9bb4d8" stroke-width="1.4" opacity=".7"/><path d="M36 94l24-8 50-1 36 2v9z" fill="#8f9fd0"/><path d="M100 88l40-1 6 6v3h-40z" fill="#7f8fc6"/><circle cx="35.6" cy="5.6" r="1.6" fill="#f6f3c8"/><circle cx="35.2" cy="12" r="1.3" fill="#eef0e0"/><path d="M90 40l6 4 3 10-4 3-7-8z" fill="#1b1c26"/><path d="M66 46l8-6 12 2 8 10 2 14 0 12-8 2-4-10-6 2-2 12-12-2-4-12 2-16z" fill="#4d538f"/><path d="M70 50l14-4 6 8-14 6z M64 62l8 2-2 10-8-2z M84 60l10 2-2 12-8-2z" fill="#383d73"/><path d="M72 56l10-2 2 6-10 2z" fill="#8a90c6" opacity=".7"/><path d="M64 32q0-7 7-8 7 1 8 8l-2 8-10 0z" fill="#5b2a1e"/><circle cx="76" cy="26" r="3.6" fill="#0f1017"/><path d="M64 34l12-2 3 4-3 3-12 1z" fill="#6e6fd2"/><path d="M66 38l9 0-1 6-6 1z" fill="#dfa58c"/><path d="M62 72l6 2 0 8-6-2z M80 68l7 0 0 10-6 0z" fill="#15161d"/><path d="M66 82l12 0 0 4-12 0z M90 78l7-2 3 8-10 2z" fill="#e8475c"/><path d="M90 86l24-3 1 2-24 3z" fill="#d63b3b"/></g></svg></div>
<div class="cb" style="left:1212px;top:821px"></div>
<span class="t" style="left:1274.52px;top:832.69px;font-size:26.12px;color:#14151a;transform:scaleX(0.9680);">Easy Snowboard Tricks You can Start Using Right Away</span>
<div class="dot" style="top:829px"></div>
<div class="lang" style="top:826px"></div>
<span class="t" style="left:2066.30px;top:835.18px;font-size:22px;color:#0a0e3a;transform:scaleX(1.0120);">en-us</span>
<svg style="left:2163.35px;top:828.84px" width="32.7" height="32.7" viewBox="0 0 24 24" ><path d="M18 8h-1V6c0-2.76-2.24-5-5-5S7 3.24 7 6h2c0-1.66 1.34-3 3-3s3 1.34 3 3v2H6c-1.1 0-2 .9-2 2v10c0 1.1.9 2 2 2h12c1.1 0 2-.9 2-2V10c0-1.1-.9-2-2-2zm0 12H6V10h12v10zm-6-3c1.1 0 2-.9 2-2s-.9-2-2-2-2 .9-2 2 .9 2 2 2z" fill="#595959"/></svg>
<span class="t" style="left:2226.92px;top:832.69px;font-size:26.12px;color:#50525a;transform:scaleX(1.0206);">Published</span>
<span class="t" style="left:2388.00px;top:832.69px;font-size:26.12px;color:#50525a;transform:scaleX(0.9812);">Admin User</span>
<span class="t" style="left:2629.82px;top:832.69px;font-size:26.12px;color:#50525a;transform:scaleX(0.9644);">9/17/2025 5:36PM</span>
<svg style="left:2888.0px;top:833.5px" width="7" height="22.0" viewBox="0 0 7 22.0" ><rect x="0" y="0.00" width="7" height="7" rx="2.52" fill="#555"/><rect x="0" y="7.50" width="7" height="7" rx="2.52" fill="#555"/><rect x="0" y="15.00" width="7" height="7" rx="2.52" fill="#555"/></svg>
<div class="rowline" style="top:1036px"></div>
<div class="thumb" style="top:926px"><svg style="left:0;top:0" width="144" height="94" viewBox="0 0 144 94"><defs><filter id="tb4" x="-5%" y="-5%" width="110%" height="110%"><feGaussianBlur stdDeviation="0.55"/></filter><linearGradient id="t4s" x1="0" y1="0" x2="0" y2="1"><stop offset="0" stop-color="#a4c5ea"/><stop offset="1" stop-color="#c9def3"/></linearGradient></defs><g filter="url(#tb4)"><rect x="-2" y="-2" width="148" height="50" fill="url(#t4s)"/><ellipse cx="82" cy="5" rx="14" ry="3" fill="#e6eaf4"/><ellipse cx="134" cy="9" rx="9" ry="2.6" fill="#dfe6f3" opacity=".8"/><path d="M-2 30l10-3 8 1 10-2 12 1 10-2 12 2 10-3 10 1 10-3 12 0 10-2 10 1 12-1V45H-2z" fill="#a6bfe2"/><path d="M-2 30l10-3 8 1 10-2 12 1 10-2 12 2 10-3 10 1 10-3 12 0 10-2 10 1 12-1v6l-10 4-8-4-10 6-8-6-12 6-8-5-10 6-10-5-10 5-10-5-10 5-8-4-8 3z" fill="#f1f5fb"/><path d="M-2 43H146V96H-2z" fill="#e2e7f1"/><path d="M-2 43H146V47H-2z" fill="#d3dcec"/><path d="M-2 84H146V96H-2z" fill="#dde2ee"/><path d="M128 86l18-2v3l-16 2z" fill="#3d7c8f" opacity=".8"/><path d="M10 88l30 1v1.6l-30-.6z" fill="#7fa3a8" opacity=".6"/><path d="M98 44l4-3 12 0 5 18-1 4-14 2z" fill="#dcdcdc"/><path d="M117 28l14 0 7 33-13 4z" fill="#df4a2c"/><path d="M122 30l2 0 6 30-2 1z" fill="#f2b7a6" opacity=".7"/><path d="M98 40q2-10 12-13l10 0M108 28l8 36M90 46q2-5 7-5 4 0 6 5l6 20M98 40l20-2M122 64l20-4M106 66l20-3" stroke="#de452a" stroke-width="1.6" fill="none"/><path d="M89 47q2-4 6-4 4 1 5 5l2 10-12 0z" fill="#c4472e"/><path d="M3 75q2-4 14-7l16-5 12-9 12-3 24-1 6 4 14 2 6 5 2 9 18 0 0 7L3 77z" fill="#f6f7f9"/><path d="M4 77L128 78l0 9-76 2-24-4z" fill="#e3e5e8"/><path d="M3 76L128 77.4" stroke="#2b2e33" stroke-width="1"/><path d="M30 64l14-9.6 12-3 4 2 0 17-12 0-6-5z" fill="#1a222e"/><path d="M63 52l12-1 5 4 1 18-17 0z" fill="#222a36"/><path d="M66 58l5 0 0 12-5 0z M74 60l5 0 0 10-5 0z" fill="#9aa0a8" opacity=".8"/><path d="M85 55l8 1 5 6 0 6-13 1z" fill="#c9cdd2"/><path d="M88 60l6 0 0 7-6 0z" fill="#9aa2ab"/></g></svg></div>
<div class="cb" style="left:1212px;top:949px"></div>
<span class="t" style="left:1275.70px;top:960.69px;font-size:26.12px;color:#14151a;transform:scaleX(0.9790);">5 Snow Sports to Try This Winter</span>
<div class="dot" style="top:957px"></div>
<div class="lang" style="top:954px"></div>
<span class="t" style="left:2066.30px;top:963.18px;font-size:22px;color:#0a0e3a;transform:scaleX(1.0120);">en-us</span>
<svg style="left:2163.35px;top:956.84px" width="32.7" height="32.7" viewBox="0 0 24 24" ><path d="M18 8h-1V6c0-2.76-2.24-5-5-5S7 3.24 7 6h2c0-1.66 1.34-3 3-3s3 1.34 3 3v2H6c-1.1 0-2 .9-2 2v10c0 1.1.9 2 2 2h12c1.1 0 2-.9 2-2V10c0-1.1-.9-2-2-2zm0 12H6V10h12v10zm-6-3c1.1 0 2-.9 2-2s-.9-2-2-2-2 .9-2 2 .9 2 2 2z" fill="#595959"/></svg>
<span class="t" style="left:2226.92px;top:960.69px;font-size:26.12px;color:#50525a;transform:scaleX(1.0206);">Published</span>
<span class="t" style="left:2388.00px;top:960.69px;font-size:26.12px;color:#50525a;transform:scaleX(0.9812);">Admin User</span>
<span class="t" style="left:2629.82px;top:960.69px;font-size:26.12px;color:#50525a;transform:scaleX(0.9644);">9/17/2025 5:35PM</span>
<svg style="left:2888.0px;top:961.5px" width="7" height="22.0" viewBox="0 0 7 22.0" ><rect x="0" y="0.00" width="7" height="7" rx="2.52" fill="#555"/><rect x="0" y="7.50" width="7" height="7" rx="2.52" fill="#555"/><rect x="0" y="15.00" width="7" height="7" rx="2.52" fill="#555"/></svg>
<div class="rowline" style="top:1164px"></div>
<div class="thumb" style="top:1054px"><svg style="left:0;top:0" width="144" height="94" viewBox="0 0 144 94"><defs><filter id="tb5" x="-5%" y="-5%" width="110%" height="110%"><feGaussianBlur stdDeviation="0.55"/></filter><linearGradient id="t5s" x1="0" y1="0" x2="1" y2="0"><stop offset="0" stop-color="#bcd7e3"/><stop offset=".4" stop-color="#e9eef0"/><stop offset="1" stop-color="#c6dce6"/></linearGradient><radialGradient id="t5g" cx=".5" cy=".5" r=".5"><stop offset="0" stop-color="#fffef6"/><stop offset=".35" stop-color="#fdf6c4" stop-opacity=".95"/><stop offset=".7" stop-color="#f0d34e" stop-opacity=".55"/><stop offset="1" stop-color="#e8c53a" stop-opacity="0"/></radialGradient><linearGradient id="t5w" x1="0" y1="0" x2="0" y2="1"><stop offset="0" stop-color="#5fbcae"/><stop offset="1" stop-color="#1f9c92"/></linearGradient></defs><g filter="url(#tb5)"><rect x="-2" y="-2" width="148" height="52" fill="url(#t5s)"/><path d="M-2 48H146V96H-2z" fill="url(#t5w)"/><path d="M4 54l30-4 26 4 6 20-16 14-30-4-14-14z" fill="#bfe6df" opacity=".7"/><path d="M20 58l30 0 8 14-20 8-16-8z" fill="#eef8f4" opacity=".6"/><path d="M-2 22l14 10 8 8-22 0z" fill="#6d7048"/><path d="M4 38l13-12 20 12 6 4-40 0z" fill="#77733f"/><path d="M28 41l12-9 14 8 4 3z" fill="#8a7f3c"/><path d="M-2 39h10v10H-2z" fill="#3f2a20"/><path d="M10 40h24v6H10z" fill="#9c9c84"/><path d="M30 44l34 2v3l-34-1z" fill="#7f6a3c"/><path d="M8 48h2v9H8zM13 48h1.6v4H13zM20 48h1.6v4H20zM26 48h1.6v4H26zM40 49h1.6v3H40z" fill="#3a3626"/><path d="M76 38l15-13 16 12 4 3z" fill="#85803f"/><path d="M84 39h24v8H84z" fill="#8a7440"/><path d="M100 36l18-18 28-10v30z" fill="#80876a"/><path d="M110 36h36v16h-34z" fill="#5d3826"/><path d="M102 38h10v12h-10z" fill="#b9c4bc"/><path d="M112 46h34v2h-34z" fill="#b5b7a8"/><path d="M52 44l10 0 84 28v24h-20l-30-28-34-16z" fill="#9e9a80"/><path d="M104 64l42 12v20h-26z" fill="#8a978f"/><path d="M62 46l30 10 8 0 0 10-12-2-26-14z" fill="#c0a558" opacity=".7"/><path d="M54 46h2v8h-2zM60 50h2.4v12H60zM66 54h2v10h-2zM76 60h2v8h-2z" fill="#55492c"/><path d="M100 50l20 6v8l-20-6z" fill="#35a596"/><path d="M120 56l26 8v8l-26-8z" fill="#dfeef0" opacity=".8"/><path d="M124 54h2v12h-2zM130 56h2v12h-2zM138 58h2v12h-2z" fill="#4c4a3a"/><circle cx="60" cy="35" r="22" fill="url(#t5g)"/><path d="M-2 79l92-17 0 3.6-92 18z" fill="#9c8c74"/><path d="M77 68h5v14h-5z" fill="#3a3a28"/><path d="M84 54l8-2 4 4 0 40-12 0z" fill="#a9a58b"/><path d="M92 60l6 0 0 36-6 0z" fill="#8d8a70"/><path d="M93 62h4M93 66h4M93 70h4M93 74h4M93 78h4M93 82h4M93 86h4M93 90h4" stroke="#d9d5be" stroke-width="1.2"/><path d="M96 57l22-5 4 4 0 40-4 0 0-36-22 5z" fill="#9f9a80"/><path d="M112 58h3v36h-3z" fill="#6f6b55"/><path d="M40 94l50-16M98 76l18-6M98 88l18-7" stroke="#a8672a" stroke-width="1"/></g></svg></div>
<div class="cb" style="left:1212px;top:1077px"></div>
<span class="t" style="left:1274.50px;top:1088.69px;font-size:26.12px;color:#14151a;transform:scaleX(0.9779);">French Polynesia Everything You Need to Know</span>
<div class="dot" style="top:1085px"></div>
<div class="lang" style="top:1082px"></div>
<span class="t" style="left:2066.30px;top:1091.18px;font-size:22px;color:#0a0e3a;transform:scaleX(1.0120);">en-us</span>
<svg style="left:2163.35px;top:1084.84px" width="32.7" height="32.7" viewBox="0 0 24 24" ><path d="M18 8h-1V6c0-2.76-2.24-5-5-5S7 3.24 7 6h2c0-1.66 1.34-3 3-3s3 1.34 3 3v2H6c-1.1 0-2 .9-2 2v10c0 1.1.9 2 2 2h12c1.1 0 2-.9 2-2V10c0-1.1-.9-2-2-2zm0 12H6V10h12v10zm-6-3c1.1 0 2-.9 2-2s-.9-2-2-2-2 .9-2 2 .9 2 2 2z" fill="#595959"/></svg>
<span class="t" style="left:2226.92px;top:1088.69px;font-size:26.12px;color:#50525a;transform:scaleX(1.0206);">Published</span>
<span class="t" style="left:2388.00px;top:1088.69px;font-size:26.12px;color:#50525a;transform:scaleX(0.9812);">Admin User</span>
<span class="t" style="left:2629.82px;top:1088.69px;font-size:26.12px;color:#50525a;transform:scaleX(0.9644);">9/17/2025 5:35PM</span>
<svg style="left:2888.0px;top:1089.5px" width="7" height="22.0" viewBox="0 0 7 22.0" ><rect x="0" y="0.00" width="7" height="7" rx="2.52" fill="#555"/><rect x="0" y="7.50" width="7" height="7" rx="2.52" fill="#555"/><rect x="0" y="15.00" width="7" height="7" rx="2.52" fill="#555"/></svg>
<span class="t" style="left:1822.02px;top:1266.13px;font-size:27.37px;color:#555;transform:scaleX(0.8914);font-weight:700;">Showing 1 - 6 of 6 | Pages 1</span>
</body></html>
